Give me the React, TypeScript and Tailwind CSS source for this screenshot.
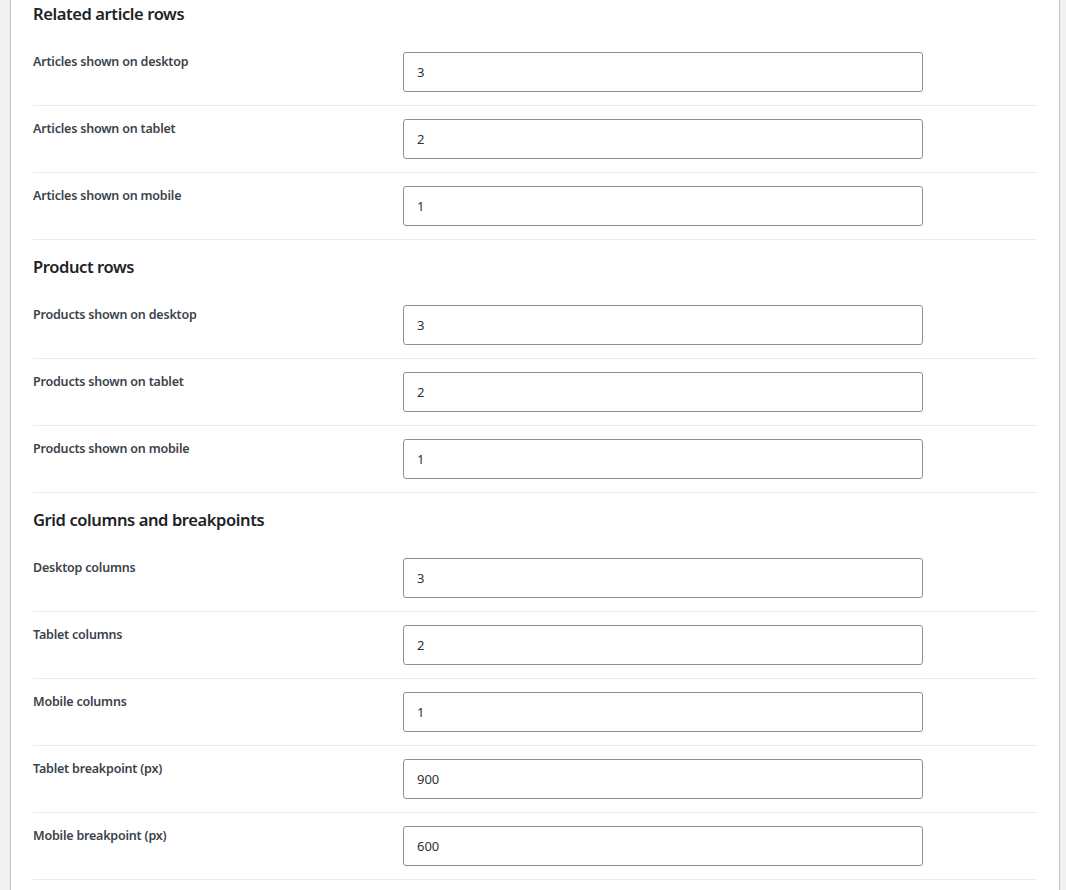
import React from "react";

type Field = { label: string; value: string };
type Section = { title: string; fields: Field[] };

const sections: Section[] = [
  {
    title: "Related article rows",
    fields: [
      { label: "Articles shown on desktop", value: "3" },
      { label: "Articles shown on tablet", value: "2" },
      { label: "Articles shown on mobile", value: "1" },
    ],
  },
  {
    title: "Product rows",
    fields: [
      { label: "Products shown on desktop", value: "3" },
      { label: "Products shown on tablet", value: "2" },
      { label: "Products shown on mobile", value: "1" },
    ],
  },
  {
    title: "Grid columns and breakpoints",
    fields: [
      { label: "Desktop columns", value: "3" },
      { label: "Tablet columns", value: "2" },
      { label: "Mobile columns", value: "1" },
      { label: "Tablet breakpoint (px)", value: "900" },
      { label: "Mobile breakpoint (px)", value: "600" },
    ],
  },
];

function FieldRow({ label, value }: Field) {
  return (
    <div className="flex border-b border-[#ebebeb] py-[13px]">
      <label className="w-[370px] shrink-0 pt-[1px] text-[12.5px] font-semibold leading-[17px] tracking-[-0.2px] text-[#3c434a]">
        {label}
      </label>
      <input
        type="text"
        defaultValue={value}
        className="h-[40px] w-[520px] rounded-[3px] border border-[#8c8f94] bg-white px-[13px] text-[13px] text-[#2c3338] outline-none"
      />
    </div>
  );
}

export default function App() {
  return (
    <div
      className="flex h-[890px] overflow-hidden bg-[#f0f0f1] pl-[10px] pr-[6px]"
      style={{ fontFamily: '"Noto Sans", "Open Sans", sans-serif' }}
    >
      <div className="flex-1 border-x border-[#c3c4c7] bg-white px-[22px]">
        {sections.map((s, i) => (
          <section key={s.title}>
            <h2
              className={`${i === 0 ? "mt-[3px]" : "mt-[16px]"} mb-[14px] text-[16.5px] font-semibold leading-[22px] tracking-[-0.4px] text-[#1d2327]`}
            >
              {s.title}
            </h2>
            {s.fields.map((f) => (
              <FieldRow key={f.label} {...f} />
            ))}
          </section>
        ))}
      </div>
    </div>
  );
}
